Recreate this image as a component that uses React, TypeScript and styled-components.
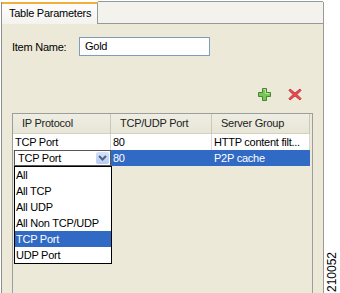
import React from 'react'
import styled, { createGlobalStyle } from 'styled-components'

const GlobalStyle = createGlobalStyle`
  html, body {
    margin: 0;
    padding: 0;
    background: #ffffff;
  }
  * {
    box-sizing: border-box;
  }
`

const Page = styled.div`
  width: 340px;
  height: 293px;
  padding-top: 2px;
  display: flex;
  overflow: hidden;
  background: #ffffff;
  font-family: "Liberation Sans", Arial, sans-serif;
  font-size: 11px;
  letter-spacing: -0.25px;
  color: #000;
`

const Frame = styled.div`
  margin-left: 1px;
  width: 323px;
  display: flex;
  flex-direction: column;
  border-left: 1px solid #8c8c8c;
  border-right: 1px solid #9a9a9a;
`

const TabBar = styled.div`
  height: 22px;
  display: flex;
`

const Tab = styled.div`
  width: 96px;
  height: 22px;
  padding: 3px 0 0 7px;
  background: linear-gradient(#fdfdfd, #f4f3ee);
  border-top: 2px solid #f2b03a;
  border-right: 1px solid #919b9c;
  white-space: nowrap;
`

const TabFiller = styled.div`
  flex: 1;
  background: #f3f2ec;
  border-top: 1px solid #919b9c;
  border-bottom: 1px solid #919b9c;
  margin-top: -1px;
`

const Body = styled.div`
  flex: 1;
  background: #ece9d8;
  padding: 13px 10px 0 10px;
  display: flex;
  flex-direction: column;
`

const NameRow = styled.div`
  display: flex;
  align-items: center;
  height: 19px;
`

const Label = styled.span`
  width: 67px;
`

const NameInput = styled.div`
  width: 131px;
  height: 19px;
  padding: 2px 0 0 5px;
  background: #fff;
  border: 1px solid #7f9db9;
`

const Toolbar = styled.div`
  margin-top: 32px;
  height: 13px;
  display: flex;
  justify-content: flex-end;
  gap: 17px;
  padding-right: 11px;
`

const TableBox = styled.div`
  margin-top: 12px;
  flex: 1;
  border: 1px solid #9d9d9d;
  border-bottom: none;
  background: #ece9d8;
`

const Grid = styled.div<{ $h: number }>`
  display: grid;
  grid-template-columns: 98px 101px 98px 1fr;
  height: ${p => p.$h}px;
  position: relative;
`

const HeadCell = styled.div`
  padding: 3px 0 0 9px;
  background: linear-gradient(#efeee3, #e7e5d6);
  border-right: 1px solid #cbc8b5;
  border-bottom: 1px solid #d4d1bf;
  color: #222;
`

const Cell = styled.div<{ $sel?: boolean }>`
  padding: 2px 0 0 2px;
  background: ${p => (p.$sel ? '#316ac5' : '#fff')};
  color: ${p => (p.$sel ? '#fff' : '#000')};
  border-right: 1px solid ${p => (p.$sel ? '#316ac5' : '#d8d8d8')};
  white-space: nowrap;
  overflow: hidden;
`

const Blank = styled.div``

const ComboCell = styled.div`
  position: relative;
  padding-left: 1px;
`

const Combo = styled.div`
  height: 16px;
  border: 1px solid #555;
  background: #fff;
  display: flex;
  align-items: center;
  padding-left: 3px;
`

const ComboText = styled.span`
  flex: 1;
`

const ComboButton = styled.div`
  width: 13px;
  height: 12px;
  margin-right: 1px;
  background: linear-gradient(#d6e2fb, #b8cbf3);
  border-radius: 2px;
  display: flex;
  align-items: center;
  justify-content: center;
`

const List = styled.div`
  position: absolute;
  top: 16px;
  left: 1px;
  width: 98px;
  border: 1px solid #000;
  background: #fff;
  z-index: 2;
`

const Option = styled.div<{ $sel?: boolean }>`
  height: 16px;
  padding: 2px 0 0 1px;
  background: ${p => (p.$sel ? '#316ac5' : '#fff')};
  color: ${p => (p.$sel ? '#fff' : '#000')};
`

const Side = styled.div`
  flex: 1;
  display: flex;
  align-items: flex-end;
  justify-content: center;
  padding-bottom: 1px;
`

const FigNum = styled.span`
  writing-mode: vertical-rl;
  transform: rotate(180deg);
  font-size: 12px;
  line-height: 12px;
  letter-spacing: 0;
`

const PlusIcon = () => (
  <svg width="13" height="13" viewBox="0 0 13 13">
    <path d="M4.5 0.5h4v4h4v4h-4v4h-4v-4h-4v-4h4z" fill="#7cc35c" stroke="#3f8a2c" />
    <path d="M5.5 1.5h2v4h4" fill="none" stroke="#b7e39e" />
  </svg>
)

const DeleteIcon = () => (
  <svg width="14" height="13" viewBox="0 0 14 13">
    <path d="M2 1 L7 5 L12 1 L13 2.5 L9 6.5 L13 10.5 L12 12 L7 8 L2 12 L1 10.5 L5 6.5 L1 2.5 Z" fill="#ec4a52" stroke="#b9252c" strokeWidth="0.8" strokeLinejoin="round" />
  </svg>
)

const Chevron = () => (
  <svg width="9" height="6" viewBox="0 0 9 6">
    <path d="M1 1 L4.5 4.5 L8 1" fill="none" stroke="#4d6185" strokeWidth="2" />
  </svg>
)

const options = ['All', 'All TCP', 'All UDP', 'All Non TCP/UDP', 'TCP Port', 'UDP Port']

const App = () => {
  return (
    <Page>
      <GlobalStyle />
      <Frame>
        <TabBar>
          <Tab>Table Parameters</Tab>
          <TabFiller />
        </TabBar>
        <Body>
          <NameRow>
            <Label>Item Name:</Label>
            <NameInput>Gold</NameInput>
          </NameRow>
          <Toolbar>
            <PlusIcon />
            <DeleteIcon />
          </Toolbar>
          <TableBox>
            <Grid $h={20}>
              <HeadCell>IP Protocol</HeadCell>
              <HeadCell>TCP/UDP Port</HeadCell>
              <HeadCell>Server Group</HeadCell>
              <Blank />
            </Grid>
            <Grid $h={16}>
              <Cell>TCP Port</Cell>
              <Cell>80</Cell>
              <Cell>HTTP content filt...</Cell>
              <Blank />
            </Grid>
            <Grid $h={16}>
              <ComboCell>
                <Combo>
                  <ComboText>TCP Port</ComboText>
                  <ComboButton>
                    <Chevron />
                  </ComboButton>
                </Combo>
                <List>
                  {options.map(o => (
                    <Option key={o} $sel={o === 'TCP Port'}>{o}</Option>
                  ))}
                </List>
              </ComboCell>
              <Cell $sel>80</Cell>
              <Cell $sel>P2P cache</Cell>
              <Blank />
            </Grid>
          </TableBox>
        </Body>
      </Frame>
      <Side>
        <FigNum>210052</FigNum>
      </Side>
    </Page>
  )
}

export default App
